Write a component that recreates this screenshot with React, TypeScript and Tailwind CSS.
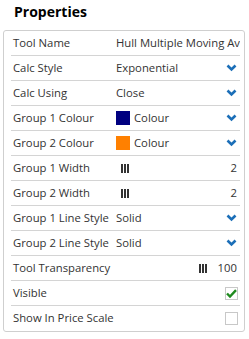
import React from 'react'

type Row = {
    label: string
    kind: 'text' | 'select' | 'colour' | 'width' | 'transparency' | 'check'
    value?: string
    colour?: string
    checked?: boolean
}

const rows: Row[] = [
    { label: 'Tool Name', kind: 'text', value: 'Hull Multiple Moving Average' },
    { label: 'Calc Style', kind: 'select', value: 'Exponential' },
    { label: 'Calc Using', kind: 'select', value: 'Close' },
    { label: 'Group 1 Colour', kind: 'colour', colour: '#000080' },
    { label: 'Group 2 Colour', kind: 'colour', colour: '#ff8000' },
    { label: 'Group 1 Width', kind: 'width', value: '2' },
    { label: 'Group 2 Width', kind: 'width', value: '2' },
    { label: 'Group 1 Line Style', kind: 'select', value: 'Solid' },
    { label: 'Group 2 Line Style', kind: 'select', value: 'Solid' },
    { label: 'Tool Transparency', kind: 'transparency', value: '100' },
    { label: 'Visible', kind: 'check', checked: true },
    { label: 'Show In Price Scale', kind: 'check', checked: false },
]

function Chevron() {
    return (
        <svg width="11" height="8" viewBox="0 0 11 8" className="shrink-0">
            <path d="M1.5 1.5 L5.5 5.5 L9.5 1.5" fill="none" stroke="#1c6fb8" strokeWidth="2.6" />
        </svg>
    )
}

function Bars() {
    return (
        <svg width="8" height="9" viewBox="0 0 8 9" className="shrink-0">
            <rect x="0" y="0" width="2" height="9" fill="#333" />
            <rect x="3" y="0" width="2" height="9" fill="#333" />
            <rect x="6" y="0" width="2" height="9" fill="#333" />
        </svg>
    )
}

function Check({ checked }: { checked: boolean }) {
    return (
        <div className="w-[13px] h-[13px] border border-[#c8c8c8] bg-white flex items-center justify-center">
            {checked && (
                <svg width="11" height="9" viewBox="0 0 11 9">
                    <path d="M1 4.5 L4 7.5 L10 1.2" fill="none" stroke="#1f8a1f" strokeWidth="2.4" />
                </svg>
            )}
        </div>
    )
}

function Value({ row }: { row: Row }) {
    switch (row.kind) {
        case 'text':
            return <div className="flex-1 min-w-0 whitespace-nowrap overflow-hidden pr-[3px]">{row.value}</div>
        case 'select':
            return (
                <div className="flex-1 flex items-center justify-between pr-[3px]">
                    <span>{row.value}</span>
                    <Chevron />
                </div>
            )
        case 'colour':
            return (
                <div className="flex-1 flex items-center justify-between pr-[3px]">
                    <div className="flex items-center gap-[4px]">
                        <div className="w-[14px] h-[14px]" style={{ backgroundColor: row.colour }} />
                        <span>Colour</span>
                    </div>
                    <Chevron />
                </div>
            )
        case 'width':
            return (
                <div className="flex-1 flex items-center justify-between pl-[5px] pr-[3px]">
                    <Bars />
                    <span>{row.value}</span>
                </div>
            )
        case 'transparency':
            return (
                <div className="flex-1 flex items-center justify-end gap-[11px] pr-[3px]">
                    <Bars />
                    <span>{row.value}</span>
                </div>
            )
        case 'check':
            return (
                <div className="flex-1 flex items-center justify-end pr-[2px]">
                    <Check checked={!!row.checked} />
                </div>
            )
    }
}

export default function App() {
    return (
        <div className="w-[249px] h-[339px] bg-white font-['Open_Sans',sans-serif] text-[#333]">
            <h1 className="font-bold text-[14px] leading-none pl-[14px] pt-[5px] text-black">Properties</h1>
            <div className="mt-[11px] ml-[3px] w-[242px] border border-[#cfcfcf] rounded-[3px] pl-[7px] pr-[4px]">
                {rows.map((row, i) => (
                    <div
                        key={row.label}
                        className={`h-[25px] flex items-center text-[11.3px] ${i < rows.length - 1 ? 'border-b border-[#d4d4d4]' : ''}`}
                    >
                        <div className="w-[105px] pl-[2px] shrink-0 whitespace-nowrap">{row.label}</div>
                        <Value row={row} />
                    </div>
                ))}
            </div>
        </div>
    )
}
